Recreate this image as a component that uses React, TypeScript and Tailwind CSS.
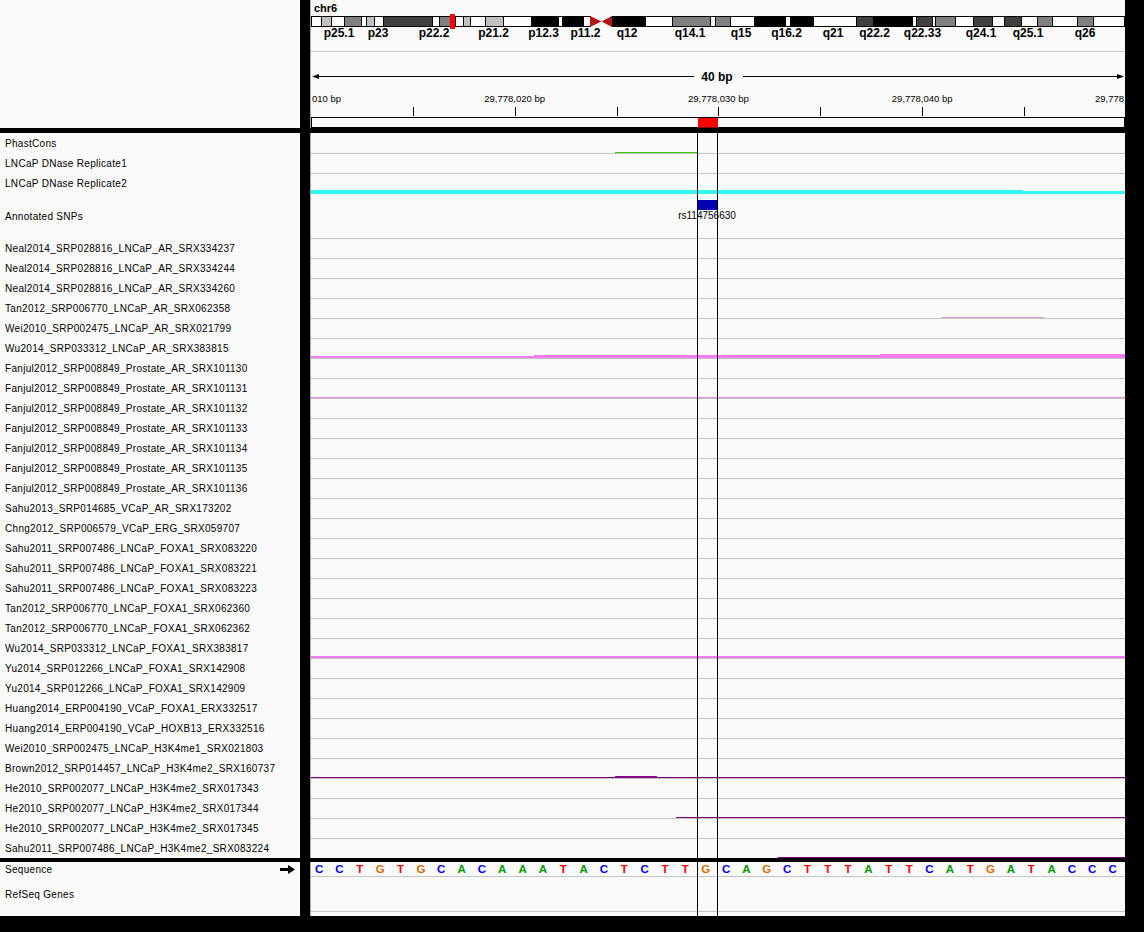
import React from "react";

type Mark = { x: number; w: number; y: number; h: number; c: string };

const W = "#ffffff";
const L = "#c0c0c0";
const G = "#808080";
const D = "#404040";
const B = "#000000";

// cytobands in screen px (absolute x)
const BANDS: [number, number, string][] = [
  [311, 321, W], [321, 331, L], [331, 344, W], [344, 361, G], [361, 366, W],
  [366, 374, L], [374, 383, W], [383, 432, D], [432, 439, W], [439, 455, G],
  [455, 463, W], [463, 470, L], [470, 485, W], [485, 503, L], [503, 531, W],
  [531, 558, B], [558, 562, W], [562, 583, B], [583, 590, W],
  [612, 645, B], [645, 672, W], [672, 710, G], [710, 715, W], [715, 730, G],
  [730, 754, W], [754, 785, B], [785, 790, W], [790, 813, B], [813, 856, W],
  [856, 873, D], [873, 912, B], [912, 916, W], [916, 932, D], [932, 935, W],
  [935, 955, G], [955, 973, W], [973, 992, D], [992, 1004, W], [1004, 1021, D],
  [1021, 1037, W], [1037, 1052, G], [1052, 1077, W], [1077, 1093, G], [1093, 1124, W],
];

const BAND_LABELS: [string, number][] = [
  ["p25.1", 339], ["p23", 378], ["p22.2", 434], ["p21.2", 493.5], ["p12.3", 543.5],
  ["p11.2", 585.5], ["q12", 627], ["q14.1", 690], ["q15", 741], ["q16.2", 786.5],
  ["q21", 833], ["q22.2", 874.5], ["q22.33", 922.5], ["q24.1", 981], ["q25.1", 1028], ["q26", 1085],
];

const PX_PER_BP = 20.38;
const ORIGIN = -0.2;

const NAMES = [
  "Neal2014_SRP028816_LNCaP_AR_SRX334237",
  "Neal2014_SRP028816_LNCaP_AR_SRX334244",
  "Neal2014_SRP028816_LNCaP_AR_SRX334260",
  "Tan2012_SRP006770_LNCaP_AR_SRX062358",
  "Wei2010_SRP002475_LNCaP_AR_SRX021799",
  "Wu2014_SRP033312_LNCaP_AR_SRX383815",
  "Fanjul2012_SRP008849_Prostate_AR_SRX101130",
  "Fanjul2012_SRP008849_Prostate_AR_SRX101131",
  "Fanjul2012_SRP008849_Prostate_AR_SRX101132",
  "Fanjul2012_SRP008849_Prostate_AR_SRX101133",
  "Fanjul2012_SRP008849_Prostate_AR_SRX101134",
  "Fanjul2012_SRP008849_Prostate_AR_SRX101135",
  "Fanjul2012_SRP008849_Prostate_AR_SRX101136",
  "Sahu2013_SRP014685_VCaP_AR_SRX173202",
  "Chng2012_SRP006579_VCaP_ERG_SRX059707",
  "Sahu2011_SRP007486_LNCaP_FOXA1_SRX083220",
  "Sahu2011_SRP007486_LNCaP_FOXA1_SRX083221",
  "Sahu2011_SRP007486_LNCaP_FOXA1_SRX083223",
  "Tan2012_SRP006770_LNCaP_FOXA1_SRX062360",
  "Tan2012_SRP006770_LNCaP_FOXA1_SRX062362",
  "Wu2014_SRP033312_LNCaP_FOXA1_SRX383817",
  "Yu2014_SRP012266_LNCaP_FOXA1_SRX142908",
  "Yu2014_SRP012266_LNCaP_FOXA1_SRX142909",
  "Huang2014_ERP004190_VCaP_FOXA1_ERX332517",
  "Huang2014_ERP004190_VCaP_HOXB13_ERX332516",
  "Wei2010_SRP002475_LNCaP_H3K4me1_SRX021803",
  "Brown2012_SRP014457_LNCaP_H3K4me2_SRX160737",
  "He2010_SRP002077_LNCaP_H3K4me2_SRX017343",
  "He2010_SRP002077_LNCaP_H3K4me2_SRX017344",
  "He2010_SRP002077_LNCaP_H3K4me2_SRX017345",
  "Sahu2011_SRP007486_LNCaP_H3K4me2_SRX083224",
];

const PINK = "#f47af4";
const PURPLE = "#800080";
const FULL = 814;

const ROW_MARKS: Record<number, Mark[]> = {
  3: [{ x: 630, w: 103, y: 18, h: 1, c: "#e2a2e2" }],
  5: [
    { x: 0, w: 223, y: 17, h: 2, c: PINK },
    { x: 223, w: 346, y: 16, h: 3, c: PINK },
    { x: 569, w: 245, y: 15, h: 4, c: PINK },
  ],
  7: [{ x: 0, w: FULL, y: 18, h: 1, c: "#e48ee4" }],
  20: [{ x: 0, w: FULL, y: 17, h: 2, c: PINK }],
  26: [
    { x: 0, w: FULL, y: 18, h: 1, c: PURPLE },
    { x: 304, w: 42, y: 17, h: 2, c: PURPLE },
  ],
  28: [{ x: 365, w: 449, y: 18, h: 1, c: PURPLE }],
  30: [{ x: 467, w: 347, y: 18, h: 1, c: PURPLE }],
};

const SEQ = "CCTGTGCACAAATACTCTTGCAGCTTTATTCATGATACCC";
const BASE_COLOR: Record<string, string> = {
  A: "text-[#009600]",
  C: "text-[#0000ff]",
  G: "text-[#d17105]",
  T: "text-[#ff0000]",
};

function Marks({ marks }: { marks?: Mark[] }) {
  if (!marks) return null;
  return (
    <>
      {marks.map((m, i) => (
        <div
          key={i}
          className="absolute"
          style={{ left: m.x, top: m.y, width: m.w, height: m.h, background: m.c }}
        />
      ))}
    </>
  );
}

function Ruler() {
  const ticks = [5, 10, 15, 20, 25, 30, 35];
  const labels: [string, number][] = [
    ["29,778,020 bp", 10],
    ["29,778,030 bp", 20],
    ["29,778,040 bp", 30],
  ];
  return (
    <svg width={814} height={128} className="block" fontFamily="'Liberation Sans', Arial, sans-serif">
      <text x={3} y={12} fontSize={11} fontWeight="bold" fill="#000">
        chr6
      </text>

      {/* ideogram */}
      {BANDS.map(([a, b, c], i) => (
        <rect key={i} x={a - 311 + 0.5} y={16.5} width={b - a} height={10} fill={c} stroke="#000" strokeWidth={1} />
      ))}
      <polygon points="279,16 279,27 290.5,21.5" fill="#b41414" />
      <polygon points="301,16 301,27 290.5,21.5" fill="#b41414" />
      <rect x={139} y={14} width={5} height={15} fill="#ff0000" />
      {BAND_LABELS.map(([t, x]) => (
        <text key={t} x={x - 311} y={37} fontSize={12} fontWeight="bold" textAnchor="middle" fill="#000">
          {t}
        </text>
      ))}

      <line x1={0} y1={51.5} x2={814} y2={51.5} stroke="#c8c8c8" />

      {/* span arrow */}
      <line x1={2} y1={76.5} x2={383} y2={76.5} stroke="#000" />
      <polygon points="1,76.5 8,74 8,79" fill="#000" />
      <line x1={432} y1={76.5} x2={810} y2={76.5} stroke="#000" />
      <polygon points="813,76.5 806,74 806,79" fill="#000" />
      <text x={406} y={81} fontSize={12} fontWeight="bold" textAnchor="middle" fill="#000">
        40 bp
      </text>

      {/* edge labels show only the part inside the view */}
      <text x={1} y={102} fontSize={9.5} fill="#000">
        010 bp
      </text>
      {labels.map(([t, b]) => (
        <text key={t} x={ORIGIN + b * PX_PER_BP} y={102} fontSize={9.5} textAnchor="middle" fill="#000">
          {t}
        </text>
      ))}
      <text x={813} y={102} fontSize={9.5} textAnchor="end" fill="#000">
        29,778
      </text>
      {ticks.map((b) => {
        const x = Math.round(ORIGIN + b * PX_PER_BP) + 0.5;
        return <line key={b} x1={x} y1={107} x2={x} y2={116} stroke="#000" />;
      })}

      <rect x={0.5} y={117.5} width={813} height={10} fill="#fafafa" stroke="#000" />
      <rect x={387} y={118} width={20} height={9.5} fill="#ff0000" />
    </svg>
  );
}

function ArrowRight() {
  return (
    <svg width={15} height={9} className="block">
      <rect x={0} y={3} width={9} height={3} fill="#000" />
      <polygon points="8,0 15,4.5 8,9" fill="#000" />
    </svg>
  );
}

export default function App() {
  return (
    <div className="w-[1144px] h-[932px] bg-black overflow-hidden font-['Liberation_Sans',Arial,sans-serif] text-black">
      {/* header: ruler + ideogram */}
      <div className="flex h-[128px] gap-[10px]">
        <div className="w-[300px] bg-[#fafafa]" />
        <div className="w-[815px] bg-[#fafafa] border-l border-[#a8a8a8] overflow-hidden">
          <Ruler />
        </div>
      </div>

      {/* data tracks */}
      <div className="flex h-[725px] gap-[10px] mt-[5px]">
        <div className="w-[300px] bg-[#fafafa] overflow-hidden text-[10px] tracking-[0.3px]">
          <div className="h-[21px] flex items-center pl-[5px] border-b border-transparent">PhastCons</div>
          <div className="h-[20px] flex items-center pl-[5px] border-b border-transparent">LNCaP DNase Replicate1</div>
          <div className="h-[20px] flex items-center pl-[5px] border-b border-transparent">LNCaP DNase Replicate2</div>
          <div className="h-[45px] flex items-center pl-[5px] border-b border-transparent">Annotated SNPs</div>
          {NAMES.map((n) => (
            <div key={n} className="h-[20px] flex items-center pl-[5px] border-b border-transparent whitespace-nowrap">
              {n}
            </div>
          ))}
        </div>

        <div className="relative w-[815px] bg-[#fafafa] border-l border-[#a8a8a8] overflow-hidden">
          <div className="relative h-[21px] border-b border-[#c4c4c4]">
            <Marks marks={[{ x: 304, w: 82, y: 19, h: 1, c: "#33cc00" }]} />
          </div>
          <div className="relative h-[20px] border-b border-[#c4c4c4]" />
          <div className="relative h-[20px] border-b border-[#c4c4c4]">
            <Marks
              marks={[
                { x: 0, w: 712, y: 16, h: 4, c: "#33f6f0" },
                { x: 712, w: 102, y: 17, h: 3, c: "#33f6f0" },
              ]}
            />
          </div>
          <div className="relative h-[45px] border-b border-[#c4c4c4]">
            <div className="absolute left-[387px] top-[6px] w-[19px] h-[10px] bg-[#0000b0]" />
            <div className="absolute left-[346px] top-[16px] w-[100px] text-center text-[10px] leading-[12px]">
              rs114756630
            </div>
          </div>
          {NAMES.map((n, k) => (
            <div key={n} className="relative h-[20px] border-b border-[#c4c4c4]">
              <Marks marks={ROW_MARKS[k]} />
            </div>
          ))}
          <div className="absolute top-0 bottom-0 left-[386px] w-px bg-black" />
          <div className="absolute top-0 bottom-0 left-[406px] w-px bg-black" />
        </div>
      </div>

      {/* sequence + genes */}
      <div className="flex h-[54px] gap-[10px] mt-[4px]">
        <div className="w-[300px] bg-[#fafafa] text-[10px] tracking-[0.3px]">
          <div className="h-[15px] flex items-center justify-between pl-[5px] pr-[5px]">
            <span>Sequence</span>
            <ArrowRight />
          </div>
          <div className="h-[35px] flex items-center pl-[5px]">RefSeq Genes</div>
        </div>
        <div className="relative w-[815px] bg-[#fafafa] border-l border-[#a8a8a8] overflow-hidden">
          <div className="h-[15px] border-b border-[#c4c4c4] ml-[-2px] grid grid-cols-[repeat(40,20.35px)] items-center">
            {SEQ.split("").map((b, i) => (
              <span key={i} className={`text-center text-[11.5px] leading-[14px] font-bold ${BASE_COLOR[b]}`}>
                {b}
              </span>
            ))}
          </div>
          <div className="h-[35px] border-b border-[#c4c4c4]" />
          <div className="absolute top-0 bottom-0 left-[386px] w-px bg-black" />
          <div className="absolute top-0 bottom-0 left-[406px] w-px bg-black" />
        </div>
      </div>
    </div>
  );
}
